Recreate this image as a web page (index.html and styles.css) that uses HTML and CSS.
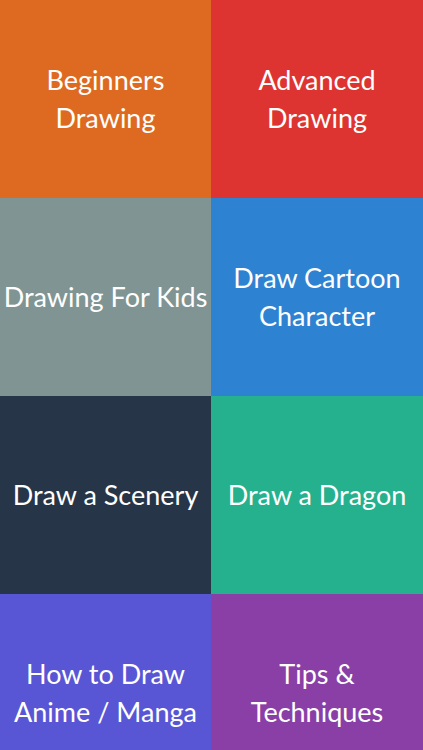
FILE: index.html
```html
<!DOCTYPE html>
<html lang="en">
<head>
<meta charset="utf-8">
<title>Drawing Lessons</title>
<link rel="stylesheet" href="styles.css">
</head>
<body>
<main class="grid">
  <a class="tile orange">Beginners<br>Drawing</a>
  <a class="tile red">Advanced<br>Drawing</a>
  <a class="tile grey">Drawing For Kids</a>
  <a class="tile blue">Draw Cartoon<br>Character</a>
  <a class="tile navy">Draw a Scenery</a>
  <a class="tile green">Draw a Dragon</a>
  <a class="tile indigo">How to Draw<br>Anime / Manga</a>
  <a class="tile purple">Tips &amp;<br>Techniques</a>
</main>
</body>
</html>
```

FILE: styles.css
```css
html, body {
  margin: 0;
  padding: 0;
  height: 100%;
  overflow: hidden;
}
body {
  font-family: "Lato", "DejaVu Sans", sans-serif;
  background: #263547;
}
.grid {
  display: grid;
  grid-template-columns: 211px 212px;
  grid-auto-rows: 198px;
}
.tile {
  display: flex;
  align-items: center;
  justify-content: center;
  text-align: center;
  color: #ffffff;
  font-size: 27px;
  line-height: 38px;
  white-space: nowrap;
  text-decoration: none;
}
.orange { background: #de6a22; }
.red { background: #de3431; }
.grey { background: #7f9493; }
.blue { background: #2d83d2; }
.navy { background: #263547; }
.green { background: #26b18e; }
.indigo { background: #5856d5; }
.purple { background: #893fa5; }
```
